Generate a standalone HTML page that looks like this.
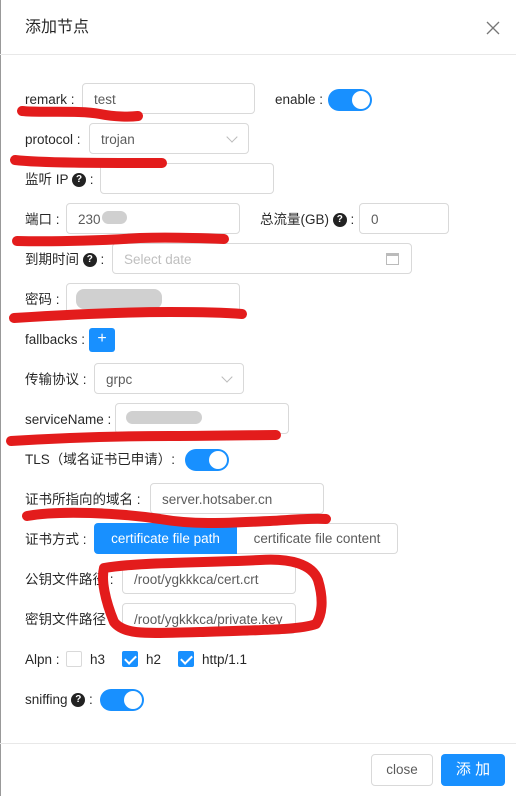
<!DOCTYPE html>
<html><head><meta charset="utf-8"><style>
*{box-sizing:border-box;margin:0;padding:0}
body{width:516px;height:796px;background:#fff;position:relative;overflow:hidden;font-family:"Liberation Sans","Noto Sans CJK SC",sans-serif;font-size:13.5px;color:rgba(0,0,0,.85)}
.a{position:absolute}
.lbl{position:absolute;line-height:20px;white-space:nowrap;margin-top:1px}
.inp{position:absolute;height:31px;border:1px solid #d9d9d9;border-radius:4px;padding:1px 11px 0;line-height:29px;color:rgba(0,0,0,.65);white-space:nowrap;overflow:hidden}
.tg{position:absolute;width:44px;height:22px;border-radius:11px;background:#1890ff}
.tg::after{content:"";position:absolute;right:2px;top:2px;width:18px;height:18px;border-radius:50%;background:#fff}
.q{display:inline-block;width:14px;height:14px;border-radius:50%;background:#222;color:#fff;font-size:10px;line-height:14px;text-align:center;font-weight:bold;vertical-align:top;position:relative;top:3px}
.arr{position:absolute;right:12px;top:9px;width:8px;height:8px;border-right:1px solid #bbb;border-bottom:1px solid #bbb;transform:rotate(45deg)}
.cb{position:absolute;width:16px;height:16px;border:1px solid #d9d9d9;border-radius:2px}
.cb.on{background:#1890ff;border-color:#1890ff}
.cb.on::after{content:"";position:absolute;left:4px;top:1px;width:5px;height:9px;border-right:2px solid #fff;border-bottom:2px solid #fff;transform:rotate(45deg)}
.blur{position:absolute;background:#d0d0d0;border-radius:8px}
</style></head><body>
<div class="a" style="left:0;top:0;width:1px;height:796px;background:#999"></div>
<div class="lbl" style="left:25px;top:17px;font-size:16px">添加节点</div>
<svg class="a" style="left:486px;top:21px" width="14" height="14" stroke="#777" stroke-width="1.3"><path d="M1 1L13 13M13 1L1 13"/></svg>
<div class="a" style="left:0;top:54px;width:516px;height:1px;background:#e8e8e8"></div>

<div class="lbl" style="left:25px;top:89px">remark :</div>
<div class="inp" style="left:82px;top:83px;width:173px">test</div>
<div class="lbl" style="left:275px;top:89px">enable :</div>
<div class="tg" style="left:328px;top:89px"></div>

<div class="lbl" style="left:25px;top:129px">protocol :</div>
<div class="inp" style="left:89px;top:123px;width:160px">trojan<span class="arr"></span></div>

<div class="lbl" style="left:25px;top:169px">监听 IP <span class="q">?</span> :</div>
<div class="inp" style="left:100px;top:163px;width:174px"></div>

<div class="lbl" style="left:25px;top:209px">端口 :</div>
<div class="inp" style="left:66px;top:203px;width:174px">230</div>
<div class="blur" style="left:102px;top:211px;width:25px;height:13px"></div>
<div class="lbl" style="left:260px;top:209px">总流量(GB) <span class="q">?</span> :</div>
<div class="inp" style="left:359px;top:203px;width:90px">0</div>

<div class="lbl" style="left:25px;top:249px">到期时间 <span class="q">?</span> :</div>
<div class="inp" style="left:112px;top:243px;width:300px;color:#bfbfbf">Select date<span class="a" style="right:12px;top:9px;width:13px;height:12px;border:1px solid #bbb;border-top-width:3px"></span></div>

<div class="lbl" style="left:25px;top:289px">密码 :</div>
<div class="inp" style="left:66px;top:283px;width:174px"></div>
<div class="blur" style="left:76px;top:289px;width:86px;height:20px"></div>

<div class="lbl" style="left:25px;top:329px">fallbacks :</div>
<div class="a" style="left:89px;top:328px;width:26px;height:24px;background:#1890ff;border-radius:3px;color:#fff;text-align:center;line-height:22px;font-size:16px">+</div>

<div class="lbl" style="left:25px;top:369px">传输协议 :</div>
<div class="inp" style="left:94px;top:363px;width:150px">grpc<span class="arr"></span></div>

<div class="lbl" style="left:25px;top:409px">serviceName :</div>
<div class="inp" style="left:115px;top:403px;width:174px"></div>
<div class="blur" style="left:126px;top:411px;width:76px;height:13px"></div>

<div class="lbl" style="left:25px;top:449px">TLS（域名证书已申请）:</div>
<div class="tg" style="left:185px;top:449px"></div>

<div class="lbl" style="left:25px;top:489px">证书所指向的域名 :</div>
<div class="inp" style="left:150px;top:483px;width:174px">server.hotsaber.cn</div>

<div class="lbl" style="left:25px;top:529px">证书方式 :</div>
<div class="a" style="left:94px;top:523px;width:143px;height:31px;background:#1890ff;color:#fff;line-height:32px;text-align:center;border-radius:4px 0 0 4px">certificate file path</div>
<div class="a" style="left:237px;top:523px;width:161px;height:31px;border:1px solid #d9d9d9;border-left:none;border-radius:0 4px 4px 0;line-height:30px;text-align:center;color:rgba(0,0,0,.65)">certificate file content</div>

<div class="lbl" style="left:25px;top:569px">公钥文件路径 :</div>
<div class="inp" style="left:122px;top:563px;width:174px">/root/ygkkkca/cert.crt</div>
<div class="lbl" style="left:25px;top:609px">密钥文件路径 :</div>
<div class="inp" style="left:122px;top:603px;width:174px">/root/ygkkkca/private.key</div>

<div class="lbl" style="left:25px;top:649px">Alpn :</div>
<div class="cb" style="left:66px;top:651px"></div><div class="lbl" style="left:90px;top:649px">h3</div>
<div class="cb on" style="left:122px;top:651px"></div><div class="lbl" style="left:146px;top:649px">h2</div>
<div class="cb on" style="left:178px;top:651px"></div><div class="lbl" style="left:202px;top:649px">http/1.1</div>

<div class="lbl" style="left:25px;top:689px">sniffing <span class="q">?</span> :</div>
<div class="tg" style="left:100px;top:689px"></div>

<div class="a" style="left:0;top:743px;width:516px;height:1px;background:#e8e8e8"></div>
<div class="a" style="left:371px;top:754px;width:62px;height:32px;border:1px solid #d9d9d9;border-radius:4px;text-align:center;line-height:30px;color:rgba(0,0,0,.65)">close</div>
<div class="a" style="left:441px;top:754px;width:64px;height:32px;background:#1890ff;border-radius:4px;text-align:center;line-height:32px;color:#fff;font-size:15px">添 加</div>

<svg class="a" style="left:0;top:0" width="516" height="796" fill="none" stroke="#e31c1c" stroke-linecap="round" stroke-linejoin="round">
<path d="M22 111 C40 113 80 110 100 114 C115 117 130 117 138 116" stroke-width="10"/>
<path d="M15 160 C40 163 100 163 162 163" stroke-width="10"/>
<path d="M17 241 C60 242 110 240 140 238 C170 237 200 238 224 239" stroke-width="10"/>
<path d="M14 318 C60 315 120 312 170 312 C200 312 230 313 242 314" stroke-width="10"/>
<path d="M11 441 C60 438 120 436 170 436 C220 436 260 435 276 435" stroke-width="10"/>
<path d="M27 516 C60 510 120 513 160 519 C200 526 240 522 270 521 C290 520 310 518 326 519" stroke-width="10"/>
<path d="M104 568 C140 562 200 563 260 560 C290 558 312 564 318 580 C324 600 322 615 316 624 C300 630 260 630 200 632 C150 633 125 636 114 622 C105 600 101 580 104 568 Z" stroke-width="10"/>
</svg>
</body></html>
